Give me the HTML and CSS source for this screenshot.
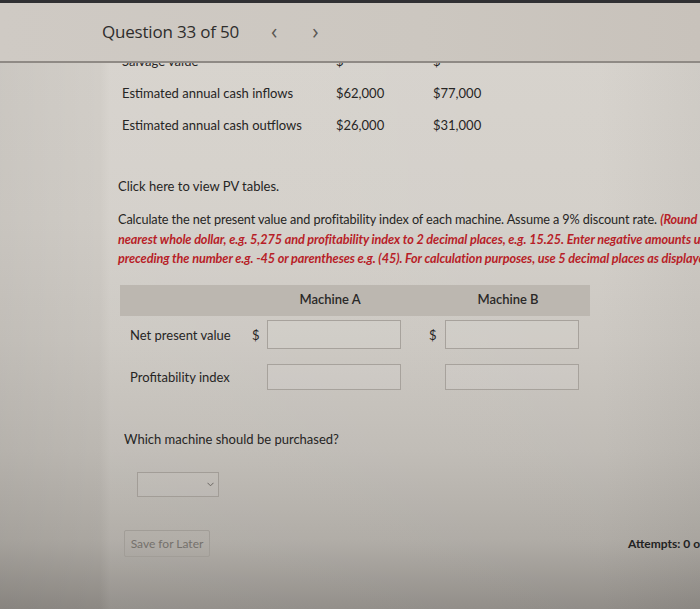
FILE: index.html
```html
<!DOCTYPE html>
<html lang="en">
<head>
<meta charset="utf-8">
<title>Question 33 of 50</title>
<link rel="stylesheet" href="styles.css">
</head>
<body>
<div class="screen">
  <header class="topbar">
    <span class="qtitle">Question 33 of 50</span>
    <span class="nav">&lsaquo;</span>
    <span class="nav next">&rsaquo;</span>
  </header>
  <main class="main">
    <div class="panel">
      <div class="datarows">
        <div class="drow first"><span class="dlabel">Salvage value</span><span class="dval">$</span><span class="dval">$</span></div>
        <div class="drow"><span class="dlabel">Estimated annual cash inflows</span><span class="dval">$62,000</span><span class="dval">$77,000</span></div>
        <div class="drow"><span class="dlabel">Estimated annual cash outflows</span><span class="dval">$26,000</span><span class="dval">$31,000</span></div>
      </div>
      <p class="link">Click here to view PV tables.</p>
      <p class="instr">Calculate the net present value and profitability index of each machine. Assume a 9% discount rate. <em class="red">(Round answers to the</em><br><em class="red">nearest whole dollar, e.g. 5,275 and profitability index to 2 decimal places, e.g. 15.25. Enter negative amounts using either a negative sign</em><br><em class="red">preceding the number e.g. -45 or parentheses e.g. (45). For calculation purposes, use 5 decimal places as displayed in the factor table provided.)</em></p>
      <div class="answers">
        <div class="thead">
          <span class="th tha">Machine A</span>
          <span class="th thb">Machine B</span>
        </div>
        <span class="rlabel">Net present value</span>
        <span class="cur">$</span>
        <span class="box tall"></span>
        <span></span>
        <span class="cur curb">$</span>
        <span class="box tall"></span>
        <span></span>
        <span class="rlabel">Profitability index</span>
        <span></span>
        <span class="box"></span>
        <span></span>
        <span></span>
        <span class="box"></span>
        <span></span>
      </div>
      <p class="which">Which machine should be purchased?</p>
      <div class="select"><svg class="chev" width="7" height="5" viewBox="0 0 7 5"><path d="M0.5 0.8 L3.5 3.8 L6.5 0.8" fill="none" stroke="#6b6762" stroke-width="1"/></svg></div>
      <div class="footer">
        <span class="save">Save for Later</span>
        <span class="attempts">Attempts: 0 of 1 used</span>
      </div>
    </div>
  </main>
</div>
</body>
</html>
```

FILE: styles.css
```css
html, body {
  margin: 0;
  padding: 0;
}
body {
  width: 700px;
  height: 609px;
  overflow: hidden;
  font-family: Lato, "Open Sans", sans-serif;
  color: #262524;
}
.screen {
  width: 700px;
  height: 609px;
  display: flex;
  flex-direction: column;
  overflow: hidden;
  background: linear-gradient(to bottom, #d7d3cd 0px, #d3cfc9 220px, #cbc7c1 340px, #bfbbb5 450px, #aeaaa4 540px, #8f8b86 609px);
}
.topbar {
  flex: none;
  height: 58px;
  border-top: 3px solid #303033;
  border-bottom: 2px solid #8f8a85;
  background: linear-gradient(to right, #cfcac4, #ccc7c0 60%, #c8c2bb);
  display: flex;
  align-items: center;
  padding-left: 102px;
}
.qtitle {
  font-family: "Open Sans", sans-serif;
  font-size: 17px;
  color: #2e2d2c;
  letter-spacing: -0.2px;
  margin-top: -2px;
}
.nav {
  font-family: "Open Sans", sans-serif;
  font-size: 21px;
  color: #5a5753;
  margin-left: 32px;
  margin-top: -2px;
}
.nav.next {
  margin-left: 35px;
}
.main {
  flex: 1;
  overflow: hidden;
  background: linear-gradient(to right, rgba(0,0,0,0.05) 0px, rgba(0,0,0,0.02) 100px, rgba(255,255,255,0.05) 110px, rgba(255,255,255,0.02) 600px, rgba(0,0,0,0.03) 700px);
}
.panel {
  margin-left: 118px;
  margin-top: -18px;
  width: 800px;
}
.datarows {
  padding-left: 4px;
}
.drow {
  display: flex;
  height: 32px;
  align-items: center;
  font-size: 13px;
}
.dlabel {
  width: 214px;
}
.dval {
  width: 97px;
}
.link {
  margin: 35px 0 0 0;
  font-size: 13px;
  line-height: 20px;
}
.instr {
  margin: 14px 0 0 0;
  font-size: 12.7px;
  line-height: 19.5px;
  white-space: nowrap;
  letter-spacing: -0.1px;
}
.red {
  color: #b81e28;
  font-weight: 700;
  font-style: italic;
}
.answers {
  margin: 16px 0 0 2px;
  display: grid;
  grid-template-columns: 130px 17px 134px 30px 14px 134px 11px;
  grid-template-rows: 31px 38px 46px;
  width: 470px;
  align-items: center;
}
.thead {
  grid-column: 1 / -1;
  align-self: stretch;
  background: #bcb7b0;
  display: grid;
  grid-template-columns: 130px 17px 134px 30px 14px 134px 11px;
  align-items: center;
}
.th {
  font-size: 13px;
  font-weight: 600;
  color: #2a2928;
  text-align: center;
  margin-top: -2px;
}
.tha {
  grid-column: 3;
  margin-left: -8px;
}
.thb {
  grid-column: 6;
  margin-left: -8px;
}
.rlabel {
  font-size: 13px;
  padding-left: 10px;
}
.cur {
  font-size: 13px;
  padding-left: 2px;
}
.curb {
  margin-left: -4px;
}
.box {
  height: 26px;
  border: 1px solid #a7a29c;
  background: rgba(255,255,255,0.08);
  box-sizing: border-box;
}
.box.tall {
  height: 29px;
}
.which {
  margin: 30px 0 0 6px;
  font-size: 13px;
  line-height: 18px;
}
.select {
  margin: 24px 0 0 19px;
  width: 82px;
  height: 25px;
  border: 1px solid #a29d97;
  box-sizing: border-box;
  display: flex;
  align-items: center;
  justify-content: flex-end;
  padding-right: 4px;
  background: rgba(255,255,255,0.05);
}
.footer {
  margin: 33px 0 0 6px;
  display: flex;
  align-items: center;
  width: 700px;
}
.save {
  width: 86px;
  height: 27px;
  box-sizing: border-box;
  border: 1px solid #a19d97;
  border-radius: 2px;
  font-size: 12px;
  color: #75716c;
  display: flex;
  align-items: center;
  justify-content: center;
}
.attempts {
  margin-left: 418px;
  font-size: 12px;
  font-weight: 700;
  color: #222;
}
```
